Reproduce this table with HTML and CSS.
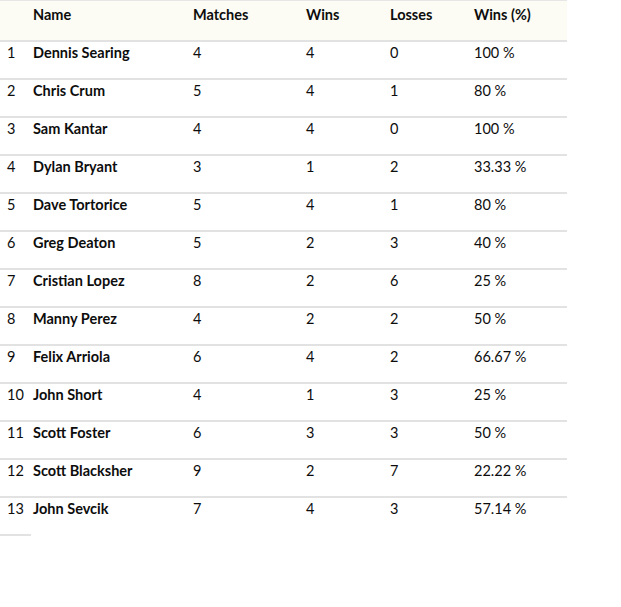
FILE: index.html
```html
<!DOCTYPE html>
<html>
<head>
<meta charset="utf-8">
<link rel="stylesheet" href="styles.css">
</head>
<body>
<table class="standings">
  <colgroup>
    <col class="c-rank"><col class="c-name"><col class="c-matches"><col class="c-wins"><col class="c-losses"><col class="c-pct">
  </colgroup>
  <thead>
    <tr><th></th><th>Name</th><th>Matches</th><th>Wins</th><th>Losses</th><th>Wins (%)</th></tr>
  </thead>
  <tbody>
    <tr><td>1</td><td class="name">Dennis Searing</td><td>4</td><td>4</td><td>0</td><td>100 %</td></tr>
    <tr><td>2</td><td class="name">Chris Crum</td><td>5</td><td>4</td><td>1</td><td>80 %</td></tr>
    <tr><td>3</td><td class="name">Sam Kantar</td><td>4</td><td>4</td><td>0</td><td>100 %</td></tr>
    <tr><td>4</td><td class="name">Dylan Bryant</td><td>3</td><td>1</td><td>2</td><td>33.33 %</td></tr>
    <tr><td>5</td><td class="name">Dave Tortorice</td><td>5</td><td>4</td><td>1</td><td>80 %</td></tr>
    <tr><td>6</td><td class="name">Greg Deaton</td><td>5</td><td>2</td><td>3</td><td>40 %</td></tr>
    <tr><td>7</td><td class="name">Cristian Lopez</td><td>8</td><td>2</td><td>6</td><td>25 %</td></tr>
    <tr><td>8</td><td class="name">Manny Perez</td><td>4</td><td>2</td><td>2</td><td>50 %</td></tr>
    <tr><td>9</td><td class="name">Felix Arriola</td><td>6</td><td>4</td><td>2</td><td>66.67 %</td></tr>
    <tr><td>10</td><td class="name">John Short</td><td>4</td><td>1</td><td>3</td><td>25 %</td></tr>
    <tr><td>11</td><td class="name">Scott Foster</td><td>6</td><td>3</td><td>3</td><td>50 %</td></tr>
    <tr><td>12</td><td class="name">Scott Blacksher</td><td>9</td><td>2</td><td>7</td><td>22.22 %</td></tr>
    <tr class="last"><td>13</td><td class="name">John Sevcik</td><td>7</td><td>4</td><td>3</td><td>57.14 %</td></tr>
  </tbody>
</table>
</body>
</html>
```

FILE: styles.css
```css
html, body {
  margin: 0;
  padding: 0;
  background: #fff;
}

.standings {
  border-collapse: collapse;
  table-layout: fixed;
  width: 567px;
  font-family: Lato, "Open Sans", "Liberation Sans", sans-serif;
  font-size: 14.5px;
  color: #0d0d0d;
}

.c-rank { width: 31px; }
.c-name { width: 154px; }
.c-matches { width: 113px; }
.c-wins { width: 84px; }
.c-losses { width: 84px; }
.c-pct { width: 101px; }

.standings th,
.standings td {
  text-align: left;
  vertical-align: top;
  padding: 2px 0 0 8px;
  line-height: 18px;
  border-bottom: 2px solid #e2e2e2;
  white-space: nowrap;
}

.standings th:first-child,
.standings td:first-child {
  padding-left: 7px;
}

.standings th:nth-child(2),
.standings td:nth-child(2) {
  padding-left: 2px;
}

.standings td {
  height: 34px;
}

.standings thead th {
  background: #fcfbf4;
  font-weight: bold;
  height: 34px;
  border-top: 1px solid #e6e6e6;
  padding-top: 5px;
}

.standings td.name {
  font-weight: bold;
}

.standings tr.last td {
  border-bottom: none;
}

.standings tr.last td:first-child {
  border-bottom: 2px solid #e2e2e2;
}
```
